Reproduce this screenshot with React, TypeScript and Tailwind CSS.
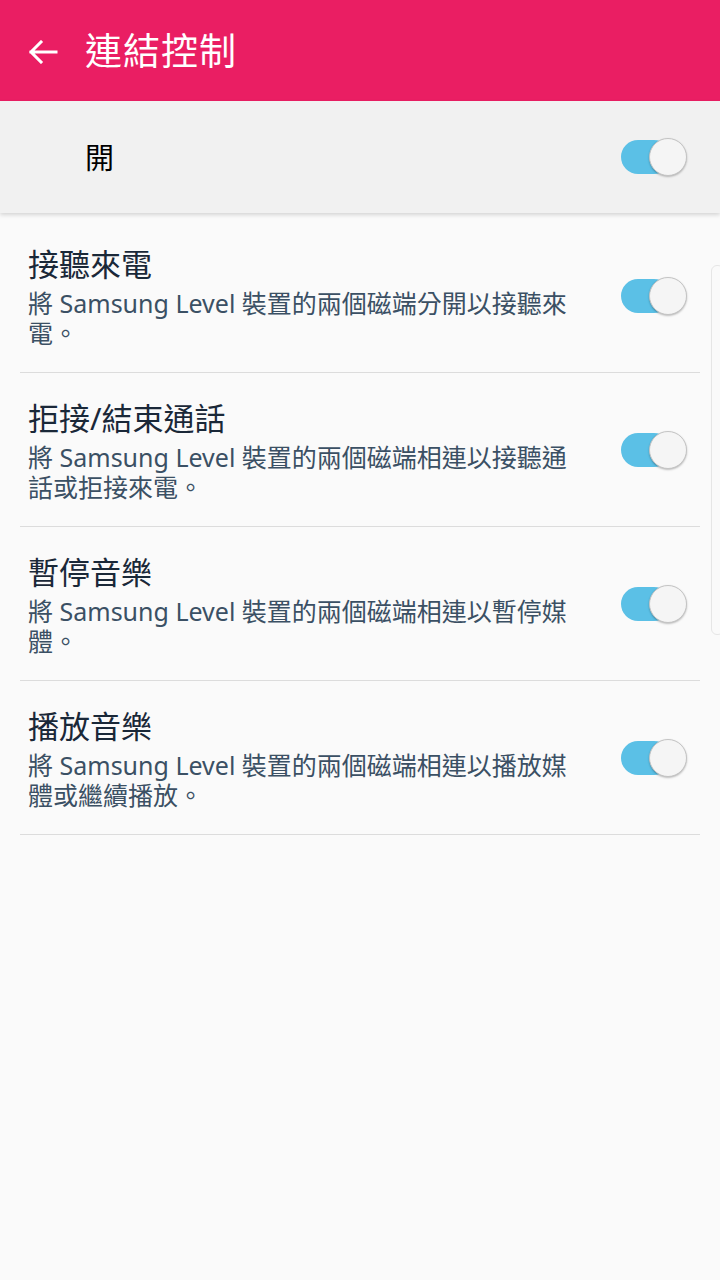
import React from "react";

const font = { fontFamily: '"Noto Sans", "Noto Sans CJK TC", sans-serif' };

function Toggle() {
  return (
    <div className="relative w-[66px] h-[38px] shrink-0">
      <div className="absolute left-0 top-[2px] w-[50px] h-[34px] rounded-full bg-[#5bc0e6]" />
      <div className="absolute right-0 top-0 w-[38px] h-[38px] rounded-full bg-[#f5f5f5] border border-[#c4c4c4] shadow-[0_1px_2px_rgba(0,0,0,0.25)]" />
    </div>
  );
}

type Item = { title: string; lines: string[] };

const items: Item[] = [
  { title: "接聽來電", lines: ["將 Samsung Level 裝置的兩個磁端分開以接聽來", "電。"] },
  { title: "拒接/結束通話", lines: ["將 Samsung Level 裝置的兩個磁端相連以接聽通", "話或拒接來電。"] },
  { title: "暫停音樂", lines: ["將 Samsung Level 裝置的兩個磁端相連以暫停媒", "體。"] },
  { title: "播放音樂", lines: ["將 Samsung Level 裝置的兩個磁端相連以播放媒", "體或繼續播放。"] },
];

export default function App() {
  return (
    <div className="w-[720px] h-[1280px] bg-[#fafafa] relative overflow-hidden" style={font}>
      <div className="h-[101px] bg-[#ea1e63] flex items-center">
        <svg width="30" height="24" viewBox="0 0 30 24" className="ml-[28px] mt-[3px]">
          <path d="M28 12H3M13 2L3 12l10 10" fill="none" stroke="#fff" strokeWidth="3" strokeLinecap="square" />
        </svg>
        <div className="ml-[27px] text-white text-[37px] leading-none tracking-[1px]">連結控制</div>
      </div>
      <div className="h-[112px] bg-[#f1f1f1] flex items-center justify-between pl-[85px] pr-[33px] shadow-[0_2px_4px_rgba(0,0,0,0.15)] relative z-10">
        <div className="text-[29px] text-black leading-none">開</div>
        <Toggle />
      </div>
      <div className="pt-[6px]">
        {items.map((it) => (
          <div key={it.title} className="mx-[20px] border-b border-[#dcdcdc] flex items-center justify-between pl-[8px] pr-[13px] pt-[25px] pb-[24px]">
            <div>
              <div className="text-[31px] leading-[40px] text-[#1a2838]">{it.title}</div>
              <div className="mt-[4px] text-[25px] leading-[30px] text-[#3b5064] whitespace-nowrap">
                {it.lines[0]}
                <br />
                {it.lines[1]}
              </div>
            </div>
            <Toggle />
          </div>
        ))}
      </div>
      <div className="absolute right-[-4px] top-[265px] w-[13px] h-[370px] rounded-[6px] border border-[#e6e6e6]" />
    </div>
  );
}
